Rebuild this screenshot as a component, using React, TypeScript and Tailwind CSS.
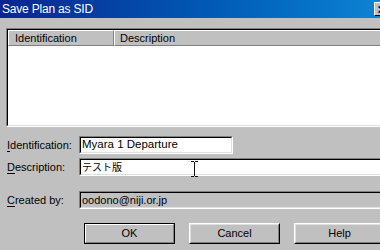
import React from 'react';

const ui = "font-['Liberation_Sans','Noto_Sans_CJK_JP',sans-serif] text-[11px] text-black";

// Win classic sunken frame: grey/white outside, black/light-grey inside
const Sunken: React.FC<{ className?: string; innerClassName?: string; children?: React.ReactNode }> = ({
  className = '',
  innerClassName = '',
  children,
}) => (
  <div className={`border border-t-[#808080] border-l-[#808080] border-b-white border-r-white ${className}`}>
    <div
      className={`h-full border border-t-black border-l-black border-b-[#dfdfdf] border-r-[#dfdfdf] ${innerClassName}`}
    >
      {children}
    </div>
  </div>
);

const Button: React.FC<{ label: string; isDefault?: boolean }> = ({ label, isDefault }) => (
  <div className={`w-[91px] h-[21px] shrink-0 ${isDefault ? 'border border-black' : ''}`}>
    {isDefault ? (
      <div className="h-full border border-t-white border-l-white border-b-[#808080] border-r-[#808080]">
        <div className="h-full flex items-center justify-center">{label}</div>
      </div>
    ) : (
      <div className="h-full border border-t-white border-l-white border-b-black border-r-black">
        <div className="h-full flex items-center justify-center border border-t-[#dfdfdf] border-l-[#dfdfdf] border-b-[#808080] border-r-[#808080]">
          {label}
        </div>
      </div>
    )}
  </div>
);

const Field: React.FC<{
  label: string;
  accel: string;
  value: string;
  width: string;
  valueClass?: string;
  readOnly?: boolean;
}> = ({ label, accel, value, width, valueClass = '', readOnly }) => (
  <div className="flex items-center h-[18px]">
    <div className="w-[79px] pl-[7px] shrink-0">
      <span className="underline underline-offset-[2px]">{accel}</span>
      {label}
    </div>
    <Sunken
      className={`${width} h-[18px] shrink-0`}
      innerClassName={`flex items-center pl-[1px] ${readOnly ? 'bg-[#c0c0c0]' : 'bg-white'}`}
    >
      <span className={valueClass}>{value}</span>
    </Sunken>
  </div>
);

export default function App() {
  return (
    <div className={`relative w-[380px] h-[250px] overflow-hidden bg-[#c0c0c0] ${ui}`}>
      {/* Title bar */}
      <div className="w-[392px] h-[18px] flex items-center pl-[2px] pr-[2px] bg-gradient-to-r from-[#0a2490] to-[#0f86d6]">
        <span className="text-white text-[12px] leading-none tracking-[-0.2px]">Save Plan as SID</span>
        <div className="ml-auto w-[16px] h-[14px] bg-[#c0c0c0] border border-t-white border-l-white border-b-black border-r-black flex items-center justify-center">
          <svg width="8" height="7" viewBox="0 0 8 7">
            <path d="M0.5 0.5l7 6M7.5 0.5l-7 6" stroke="black" strokeWidth="1.5" />
          </svg>
        </div>
      </div>

      {/* List view */}
      <Sunken className="ml-[6px] mt-[10px] w-[400px] h-[99px]" innerClassName="bg-white flex flex-col">
        <div className="flex h-[16px] bg-[#c0c0c0] shrink-0">
          <div className="w-[106px] h-full flex items-center pl-[6px] border border-t-white border-l-white border-b-[#808080] border-r-[#808080]">
            Identification
          </div>
          <div className="flex-1 h-full flex items-center pl-[5px] border border-t-white border-l-white border-b-[#808080] border-r-[#808080]">
            Description
          </div>
        </div>
      </Sunken>

      <div className="mt-[9px] flex flex-col">
        <Field
          label="dentification:"
          accel="I"
          value="Myara 1 Departure"
          width="w-[154px]"
          valueClass="text-[11.5px]"
        />
        <div className="mt-[4px]">
          <Field label="escription:" accel="D" value="テスト版" width="w-[310px]" valueClass="text-[10px]" />
        </div>
        <div className="mt-[15px]">
          <Field label="reated by:" accel="C" value="oodono@niji.or.jp" width="w-[310px]" readOnly />
        </div>
      </div>

      {/* Buttons */}
      <div className="mt-[14px] ml-[84px] flex gap-[14px] w-[400px]">
        <Button label="OK" isDefault />
        <Button label="Cancel" />
        <Button label="Help" />
      </div>

      {/* mouse I-beam cursor over the description field */}
      <svg className="absolute left-[191px] top-[161px]" width="7" height="16" viewBox="0 0 7 16">
        <path d="M0 0.5h3M4 0.5h3M3.5 1v14M0 15.5h3M4 15.5h3" stroke="#111" strokeWidth="1" />
      </svg>
    </div>
  );
}
